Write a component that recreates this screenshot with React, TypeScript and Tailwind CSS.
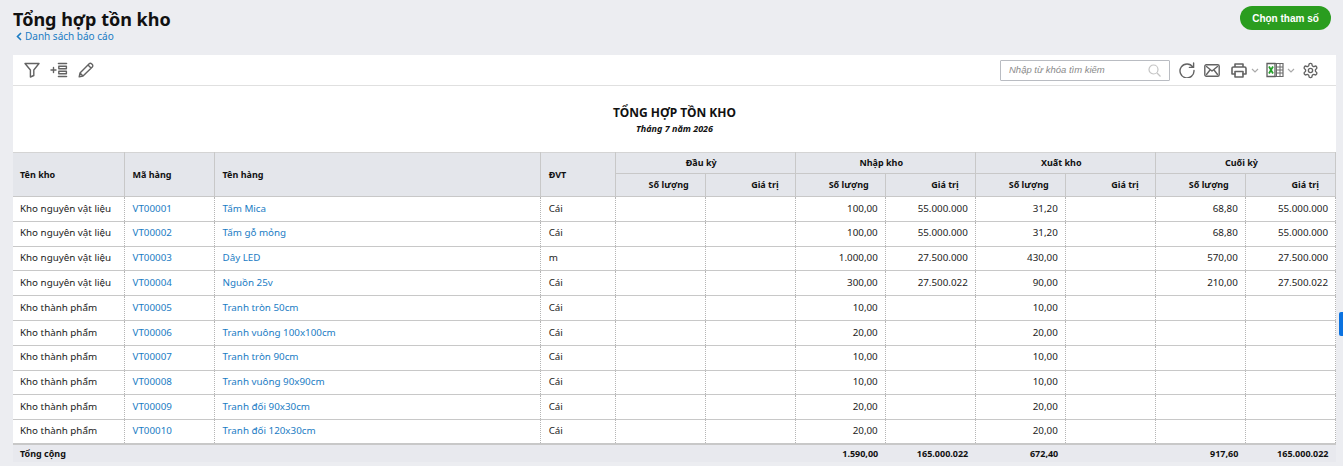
const FONT = "font-['Noto_Sans',sans-serif]";

type Row = { kho: string; ma: string; ten: string; dvt: string; vals: string[] };
const N = "Kho nguyên vật liệu";
const T = "Kho thành phẩm";
const rows: Row[] = [
  { kho: N, ma: "VT00001", ten: "Tấm Mica", dvt: "Cái", vals: ["", "", "100,00", "55.000.000", "31,20", "", "68,80", "55.000.000"] },
  { kho: N, ma: "VT00002", ten: "Tấm gỗ mỏng", dvt: "Cái", vals: ["", "", "100,00", "55.000.000", "31,20", "", "68,80", "55.000.000"] },
  { kho: N, ma: "VT00003", ten: "Dây LED", dvt: "m", vals: ["", "", "1.000,00", "27.500.000", "430,00", "", "570,00", "27.500.000"] },
  { kho: N, ma: "VT00004", ten: "Nguồn 25v", dvt: "Cái", vals: ["", "", "300,00", "27.500.022", "90,00", "", "210,00", "27.500.022"] },
  { kho: T, ma: "VT00005", ten: "Tranh tròn 50cm", dvt: "Cái", vals: ["", "", "10,00", "", "10,00", "", "", ""] },
  { kho: T, ma: "VT00006", ten: "Tranh vuông 100x100cm", dvt: "Cái", vals: ["", "", "20,00", "", "20,00", "", "", ""] },
  { kho: T, ma: "VT00007", ten: "Tranh tròn 90cm", dvt: "Cái", vals: ["", "", "10,00", "", "10,00", "", "", ""] },
  { kho: T, ma: "VT00008", ten: "Tranh vuông 90x90cm", dvt: "Cái", vals: ["", "", "10,00", "", "10,00", "", "", ""] },
  { kho: T, ma: "VT00009", ten: "Tranh đối 90x30cm", dvt: "Cái", vals: ["", "", "20,00", "", "20,00", "", "", ""] },
  { kho: T, ma: "VT00010", ten: "Tranh đối 120x30cm", dvt: "Cái", vals: ["", "", "20,00", "", "20,00", "", "", ""] },
];

const th = "border-r border-b border-[#c8c8c8] bg-[#e4e6eb] font-bold text-[9px] text-[#111] p-0";
const td = "border-r border-b border-r-[#b5b5b5] border-b-[#c8c8c8] [border-right-style:dotted] [border-bottom-style:solid] px-[7px] py-0 align-middle whitespace-nowrap";

function Toolbar() {
  const stroke = { fill: "none", stroke: "#636363", strokeWidth: 1.4, strokeLinejoin: "round" as const, strokeLinecap: "round" as const };
  return (
    <div className="h-[31px] bg-white border-b border-[#e0e0e0] flex items-center justify-between pl-[11px] pr-[17px]">
      <div className="flex items-center">
        <svg width="16" height="16" viewBox="0 0 16 16" className="mr-[10px]" {...stroke}>
          <path d="M1 1.500h14L9.800 8v5.500L6.400 15V8z" />
        </svg>
        <svg width="18" height="16" viewBox="0 0 18 16" className="mr-[10px]" {...stroke}>
          <path d="M1 8h5M3.500 5.500v5" />
          <path d="M8.500 1.500h8M8.500 14.500h8" strokeWidth="1.600" />
          <rect x="8.800" y="4.200" width="7.600" height="2.600" />
          <rect x="8.800" y="9.200" width="7.600" height="2.600" />
        </svg>
        <svg width="16" height="16" viewBox="0 0 16 16" {...stroke}>
          <path d="M1.200 14.800l.800-3.800L11.200 1.800a1.600 1.600 0 0 1 2.300 0l.800.800a1.600 1.600 0 0 1 0 2.300L5 14zM2 11l3 3M10 3l3 3" />
        </svg>
      </div>
      <div className="flex items-center">
        <div className="w-[170px] h-[21px] border border-[#b9bcc2] rounded-[1px] flex items-center justify-between pl-[8px] pr-[8px] mr-[9px]">
          <span className="text-[9.500px] italic text-[#8a8a8a] font-['Liberation_Sans',sans-serif]">Nhập từ khóa tìm kiếm</span>
          <svg width="13" height="13" viewBox="0 0 13 13" fill="none" stroke="#c4c4c4" strokeWidth="1.200">
            <circle cx="5.500" cy="5.500" r="4.500" />
            <path d="M9 9l3.500 3.500" />
          </svg>
        </div>
        <svg width="16" height="16" viewBox="0 0 16 16" className="mr-[9px]" {...stroke}>
          <path d="M13.800 5A7 7 0 1 0 15 8.500" />
          <path d="M14.600 1v4.400h-4.200" />
        </svg>
        <svg width="16" height="13" viewBox="0 0 16 13" className="mr-[11px]" {...stroke}>
          <rect x="0.800" y="0.800" width="14.400" height="11.400" rx="1.500" />
          <path d="M2.500 2.500L8 7l5.500-4.500M2.500 10.500L6.200 5.700M13.500 10.500L9.800 5.700" />
        </svg>
        <svg width="16" height="15" viewBox="0 0 16 15" className="mr-[4px]" {...stroke} strokeWidth={1.600}>
          <path d="M4 4V1h8v3M4 11H1V5.500A1.500 1.500 0 0 1 2.500 4h11A1.500 1.500 0 0 1 15 5.500V11h-3" />
          <rect x="4" y="8.500" width="8" height="5.500" />
        </svg>
        <svg width="8" height="5" viewBox="0 0 8 5" fill="none" stroke="#aaaaaa" strokeWidth="1.200" className="mr-[7px]"><path d="M1 1l3 3 3-3" /></svg>
        <svg width="18" height="16" viewBox="0 0 18 16" className="mr-[3px]">
          <path d="M6 1.500h11v13H6z" fill="none" stroke="#6a6a6a" strokeWidth="1.200" />
          <path d="M10.500 2v12M14 2v12M10.500 5h6.500M10.500 8h6.500M10.500 11h6.500" stroke="#6a6a6a" strokeWidth="1" />
          <path d="M1 1.500h8v13H1z" fill="#fff" stroke="#5f5f5f" strokeWidth="1.300" />
          <path d="M3 4.500l4 7M7 4.500l-4 7" stroke="#25a12a" strokeWidth="1.800" />
        </svg>
        <svg width="8" height="5" viewBox="0 0 8 5" fill="none" stroke="#aaaaaa" strokeWidth="1.200" className="mr-[7px]"><path d="M1 1l3 3 3-3" /></svg>
        <svg width="17" height="17" viewBox="0 0 24 24" {...stroke} strokeWidth={1.900}>
          <path d="M12.220 2h-.440a2 2 0 0 0-2 2v.180a2 2 0 0 1-1 1.730l-.430.250a2 2 0 0 1-2 0l-.150-.080a2 2 0 0 0-2.730.730l-.220.380a2 2 0 0 0 .730 2.730l.150.100a2 2 0 0 1 1 1.720v.510a2 2 0 0 1-1 1.740l-.150.090a2 2 0 0 0-.730 2.730l.220.380a2 2 0 0 0 2.730.730l.150-.080a2 2 0 0 1 2 0l.430.250a2 2 0 0 1 1 1.730V20a2 2 0 0 0 2 2h.440a2 2 0 0 0 2-2v-.180a2 2 0 0 1 1-1.730l.430-.250a2 2 0 0 1 2 0l.150.080a2 2 0 0 0 2.730-.730l.220-.390a2 2 0 0 0-.730-2.730l-.150-.080a2 2 0 0 1-1-1.740v-.500a2 2 0 0 1 1-1.740l.150-.090a2 2 0 0 0 .730-2.730l-.220-.380a2 2 0 0 0-2.730-.730l-.150.080a2 2 0 0 1-2 0l-.430-.250a2 2 0 0 1-1-1.730V4a2 2 0 0 0-2-2z" />
          <circle cx="12" cy="12" r="3" />
        </svg>
      </div>
    </div>
  );
}

export default function App() {
  return (
    <div className={`relative w-[1343px] h-[466px] overflow-hidden bg-[#ecedf1] ${FONT}`}>
      <div className="h-[55px] flex justify-between pl-[13px] pr-[12px]">
        <div>
          <h1 className="text-[18px] leading-[24px] font-bold text-[#111] mt-[7px]">Tổng hợp tồn kho</h1>
          <a className="flex items-center text-[10px] leading-[14px] text-[#1a7cc4] ml-[3px] mt-[-2px]">
            <svg width="6" height="9" viewBox="0 0 6 9" fill="none" stroke="#1a7cc4" strokeWidth="1.600" className="mr-[3px]"><path d="M5 1L1.500 4.500 5 8" /></svg>
            Danh sách báo cáo
          </a>
        </div>
        <button className="mt-[6px] w-[91px] h-[24px] rounded-full bg-[#2a9d1f] text-white text-[10px] font-bold font-['Liberation_Sans',sans-serif]">Chọn tham số</button>
      </div>
      <div className="ml-[13px] w-[1323px]">
        <Toolbar />
        <div className="h-[66px] bg-white flex flex-col items-center pt-[18px]">
          <div className="text-[12px] leading-[17px] font-bold text-[#111]">TỔNG HỢP TỒN KHO</div>
          <div className="text-[9px] leading-[13px] font-bold italic text-[#111] mt-[1px]">Tháng 7 năm 2026</div>
        </div>
        <table className="w-[1323px] table-fixed border-collapse bg-white border-t border-[#d4d4d4] text-[9.800px] text-[#222]">
          <colgroup>
            <col className="w-[111px]" />
            <col className="w-[90px]" />
            <col className="w-[326px]" />
            <col className="w-[75px]" />
            {Array.from({ length: 8 }).map((_, i) => <col key={i} className="w-[90px]" />)}
          </colgroup>
          <thead>
            <tr className="h-[21px]">
              <th rowSpan={2} className={`${th} text-left pl-[7px]`}>Tên kho</th>
              <th rowSpan={2} className={`${th} text-left pl-[8px]`}>Mã hàng</th>
              <th rowSpan={2} className={`${th} text-left pl-[8px]`}>Tên hàng</th>
              <th rowSpan={2} className={`${th} text-left pl-[8px]`}>ĐVT</th>
              {["Đầu kỳ", "Nhập kho", "Xuất kho", "Cuối kỳ"].map((g) => (
                <th key={g} colSpan={2} className={`${th} text-center pr-[8px]`}>{g}</th>
              ))}
            </tr>
            <tr className="h-[23px]">
              {Array.from({ length: 4 }).flatMap((_, i) => [
                <th key={`a${i}`} className={`${th} text-right pr-[16px]`}>Số lượng</th>,
                <th key={`b${i}`} className={`${th} text-right pr-[16px]`}>Giá trị</th>,
              ])}
            </tr>
          </thead>
          <tbody>
            {rows.map((r) => (
              <tr key={r.ma} className="h-[24.800px]">
                <td className={td}>{r.kho}</td>
                <td className={`${td} text-[#1a7cc4] pl-[8px]`}>{r.ma}</td>
                <td className={`${td} text-[#1a7cc4] pl-[8px]`}>{r.ten}</td>
                <td className={`${td} pl-[8px]`}>{r.dvt}</td>
                {r.vals.map((v, i) => (
                  <td key={i} className={`${td} text-right`}>{v}</td>
                ))}
              </tr>
            ))}
          </tbody>
          <tfoot>
            <tr className="h-[18px] bg-[#e8e9ee] font-bold text-[9px] text-[#111] border-t-2 border-[#c8c8c8]">
              <td colSpan={4} className="pl-[7px] p-0">Tổng cộng</td>
              <td />
              <td />
              <td className="text-right pr-[7px]">1.590,00</td>
              <td className="text-right pr-[7px]">165.000.022</td>
              <td className="text-right pr-[7px]">672,40</td>
              <td />
              <td className="text-right pr-[7px]">917,60</td>
              <td className="text-right pr-[7px]">165.000.022</td>
            </tr>
          </tfoot>
        </table>
      </div>
      <div className="absolute left-[1339px] top-[312px] w-[4px] h-[24px] rounded-l-[2px] bg-[#0b72e0]" />
    </div>
  );
}
